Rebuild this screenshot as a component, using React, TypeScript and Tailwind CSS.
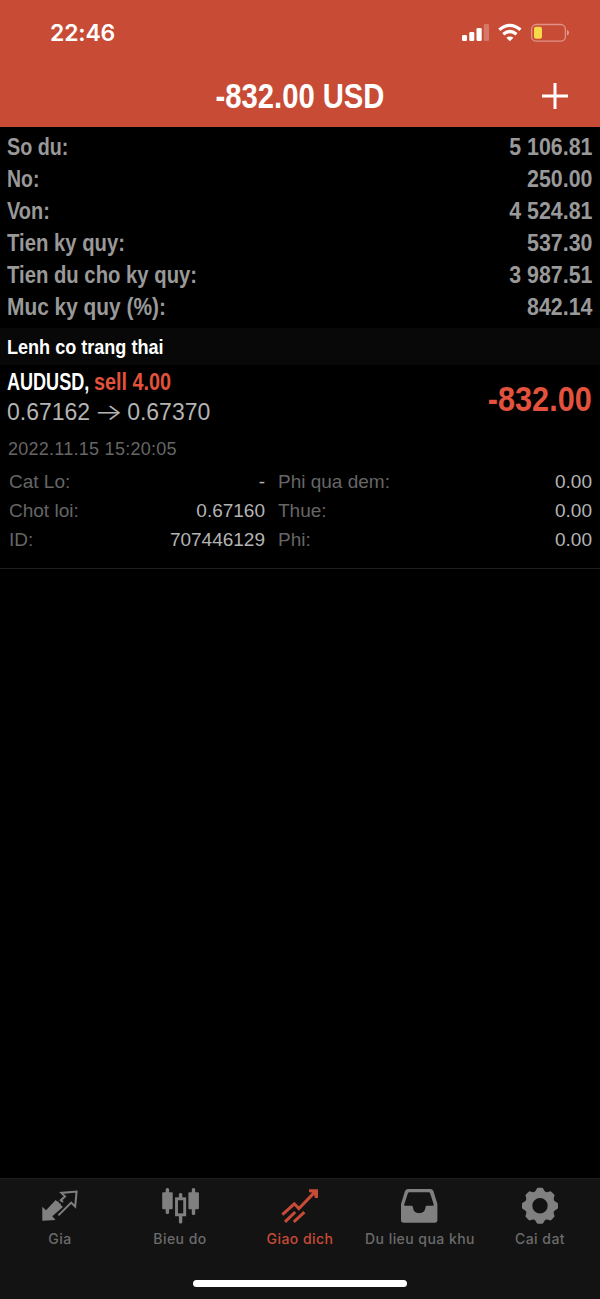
import type { ReactNode } from 'react'

const account = [
  { label: 'So du:', value: '5 106.81', scale: 'scale-x-[0.822]' },
  { label: 'No:', value: '250.00', scale: 'scale-x-[0.81]' },
  { label: 'Von:', value: '4 524.81', scale: 'scale-x-[0.83]' },
  { label: 'Tien ky quy:', value: '537.30', scale: 'scale-x-[0.845]' },
  { label: 'Tien du cho ky quy:', value: '3 987.51', scale: 'scale-x-[0.845]' },
  { label: 'Muc ky quy (%):', value: '842.14', scale: 'scale-x-[0.87]' },
]

const details = [
  { label: 'Cat Lo:', value: '-', label2: 'Phi qua dem:', value2: '0.00' },
  { label: 'Chot loi:', value: '0.67160', label2: 'Thue:', value2: '0.00' },
  { label: 'ID:', value: '707446129', label2: 'Phi:', value2: '0.00' },
]

function QuotesIcon() {
  return (
    <svg width="40" height="40" viewBox="0 0 40 40">
      <path
        fill="currentColor"
        d="M2.3 20.8 L6 24.2 L15.7 14 L17.2 15.4 L18.6 15.6 L19 17.2 L20.6 17.6 L20.9 19.2 L22.9 21 L12.3 30.3 L15.6 34 L2.3 34.8 Z"
      />
      <path
        fill="none"
        stroke="currentColor"
        strokeWidth="2"
        d="M18.4 29.4 L31.2 16.6 L35.2 20.6 L36.6 5.6 L21.4 6.9 L25 10.4 L20.8 14.2 L23 16"
      />
    </svg>
  )
}

function ChartIcon() {
  return (
    <svg width="40" height="40" viewBox="0 0 40 40" fill="currentColor">
      <rect x="5.7" y="2" width="3.4" height="26" rx="1.5" />
      <rect x="2.2" y="6.2" width="10.5" height="17" rx="1" />
      <rect x="31.8" y="2" width="3.4" height="27" rx="1.5" />
      <rect x="28.4" y="6.2" width="10.5" height="17" rx="1" />
      <rect x="18.9" y="7" width="3.4" height="6" rx="1.5" />
      <rect x="18.9" y="29" width="3.4" height="8.5" rx="1.5" />
      <rect x="16.5" y="12.8" width="8.2" height="16" fill="none" stroke="currentColor" strokeWidth="2.9" />
    </svg>
  )
}

function TradeIcon() {
  return (
    <svg width="40" height="40" viewBox="0 0 40 40" fill="none" stroke="currentColor" strokeWidth="3">
      <path d="M2.4 28.6 L14.3 17.8 L18.9 22.6 L34.5 6.4" />
      <path fill="currentColor" stroke="none" d="M29 3.2 H38 V12 H34.8 L34.2 9 L32 6.6 L29 6.2 Z" />
      <path d="M5 35.8 L15.2 26 M13.8 35.8 L24.4 26.2" />
    </svg>
  )
}

function InboxIcon() {
  return (
    <svg width="40" height="40" viewBox="0.8 0 40 40">
      <path
        fill="currentColor"
        fillRule="evenodd"
        d="M9 3 H31 Q33.4 3 34.2 5 L38.2 18 V34 Q38.2 36.8 35.5 36.8 H4.5 Q1.8 36.8 1.8 34 V18 L5.8 5 Q6.6 3 9 3 Z M10.2 6.2 Q9 6.2 8.6 7.4 L5 18.6 Q4.8 19.8 6 19.8 H12.6 Q13.6 20 13.6 21 Q14.4 27.2 20 27.2 Q25.6 27.2 26.4 21 Q26.4 20 27.4 19.8 H33.6 Q34.8 19.8 34.5 18.6 L31 7.4 Q30.6 6.2 29.4 6.2 Z"
      />
    </svg>
  )
}

function SettingsIcon() {
  const teeth = [0, 45, 90, 135, 180, 225, 270, 315]
  return (
    <svg width="40" height="40" viewBox="0 0 40 40" fill="currentColor">
      <circle cx="20" cy="19.8" r="11.3" fill="none" stroke="currentColor" strokeWidth="7.2" />
      {teeth.map((a) => (
        <path key={a} transform={`rotate(${a} 20 19.8)`} d="M14.4 5.9 Q15.9 5 16.6 2.9 Q17 1.8 18 1.8 H22 Q23 1.8 23.4 2.9 Q24.1 5 25.6 5.9 L24 9 H16 Z" />
      ))}
    </svg>
  )
}

const tabs: { name: string; icon: ReactNode; active?: boolean }[] = [
  { name: 'Gia', icon: <QuotesIcon /> },
  { name: 'Bieu do', icon: <ChartIcon /> },
  { name: 'Giao dich', icon: <TradeIcon />, active: true },
  { name: 'Du lieu qua khu', icon: <InboxIcon /> },
  { name: 'Cai dat', icon: <SettingsIcon /> },
]

function StatusBar() {
  return (
    <div className="flex h-[66px] items-center justify-between pl-[50px] pr-[30px] text-white">
      <span className="font-['Inter',sans-serif] text-[23px] font-semibold leading-none tracking-[-0.2px]">22:46</span>
      <svg width="110" height="22" viewBox="460 22 110 22" fill="white">
        <rect x="462" y="35" width="5" height="6" rx="1.3" />
        <rect x="469.3" y="32" width="5" height="9" rx="1.3" />
        <rect x="476.5" y="28" width="5.2" height="13" rx="1.3" />
        <rect x="483.8" y="24" width="5.2" height="17" rx="1.3" opacity="0.25" />
        <g fill="none" stroke="white" strokeWidth="3.2">
          <path d="M499.3 29.8 Q509.8 21 520.5 29.8" />
          <path d="M503.3 34.2 Q509.8 28.8 516.5 34.2" />
        </g>
        <path d="M506.3 37.8 Q509.8 35 513.5 37.8 L509.9 41.3 Z" />
        <rect x="531.6" y="24.5" width="33.8" height="16.6" rx="4.6" fill="none" stroke="white" strokeOpacity="0.4" strokeWidth="1.3" />
        <path d="M567 30 Q569 30.6 569 32.8 Q569 35 567 35.6 Z" opacity="0.45" />
        <rect x="534" y="26.8" width="8" height="12" rx="2" fill="#f8d94a" />
      </svg>
    </div>
  )
}

export default function App() {
  return (
    <main className="flex h-[1299px] w-[600px] flex-col overflow-hidden bg-black font-['Liberation_Sans',Arial,sans-serif]">
      <header className="h-[127px] shrink-0 bg-[#c84b36]">
        <StatusBar />
        <div className="grid h-[59px] grid-cols-[60px_1fr_60px] items-center text-white">
          <h1 className="col-start-2 scale-x-[0.835] text-center text-[35px] font-bold leading-none">-832.00 USD</h1>
          <svg width="28" height="28" viewBox="0 0 28 28" className="ml-[1px]">
            <path d="M1 14 H27 M14 1 V27" stroke="white" strokeWidth="3" />
          </svg>
        </div>
      </header>

      <section className="h-[201px] shrink-0 pl-[7px] pr-2 pt-1 text-2xl font-bold text-[#999999]">
        {account.map((row) => (
          <div key={row.label} className="flex h-8 items-center justify-between leading-8">
            <span className={`origin-left whitespace-nowrap ${row.scale}`}>{row.label}</span>
            <span className="origin-right scale-x-[0.89] whitespace-nowrap">{row.value}</span>
          </div>
        ))}
      </section>

      <h2 className="flex h-[37px] shrink-0 items-center bg-[#080808] pl-[7px] text-[21px] font-bold text-white">
        <span className="origin-left scale-x-[0.86]">Lenh co trang thai</span>
      </h2>

      <section className="h-[204px] shrink-0 border-b border-[#1e1e1e] pl-[7px] pr-2">
        <div className="flex h-[66px] justify-between">
          <div>
            <div className="flex h-[33px] items-center pt-[2px] text-[23px] font-bold">
              <span className="w-[87px] origin-left scale-x-[0.785] text-white">AUDUSD,</span>
              <span className="origin-left scale-x-[0.86] whitespace-nowrap text-[#e2523d]">sell 4.00</span>
            </div>
            <div className="flex h-[29px] items-center text-[23px] text-[#b4b4b4]">
              <span>0.67162</span>
              <span className="w-[37px] scale-x-[1.33] text-center font-['Inter',sans-serif] font-light">→</span>
              <span>0.67370</span>
            </div>
          </div>
          <span className="origin-right scale-x-[0.875] text-[35px] font-bold leading-[67px] text-[#e2523d]">-832.00</span>
        </div>
        <p className="h-9 pl-[1px] text-lg leading-9 tracking-[0.26px] text-[#666666]">2022.11.15 15:20:05</p>
        <div className="text-[19px] leading-[29px]">
          {details.map((row) => (
            <div key={row.label} className="grid grid-cols-[258px_1fr] text-[#b4b4b4]">
              <div className="flex justify-between pl-[2px]">
                <span className="text-[#666666]">{row.label}</span>
                <span>{row.value}</span>
              </div>
              <div className="flex justify-between pl-[13px]">
                <span className="text-[#666666]">{row.label2}</span>
                <span>{row.value2}</span>
              </div>
            </div>
          ))}
        </div>
      </section>

      <nav className="mt-auto h-[121px] shrink-0 border-t border-[#1e1e1e] bg-[#131313]">
        <div className="grid h-[101px] grid-cols-5 pt-[7px]">
          {tabs.map((tab) => (
            <div key={tab.name} className={tab.active ? 'flex flex-col items-center text-[#c84b36]' : 'flex flex-col items-center text-[#808080]'}>
              {tab.icon}
              <span className={tab.active ? "mt-[2px] whitespace-nowrap font-['Inter',sans-serif] text-[14px] font-medium tracking-[0.45px]" : "mt-[2px] whitespace-nowrap font-['Inter',sans-serif] text-[14px] font-medium tracking-[0.45px] text-[#6b6b6b]"}>
                {tab.name}
              </span>
            </div>
          ))}
        </div>
        <div className="mx-auto h-[7px] w-[214px] rounded-full bg-white" />
      </nav>
    </main>
  )
}
